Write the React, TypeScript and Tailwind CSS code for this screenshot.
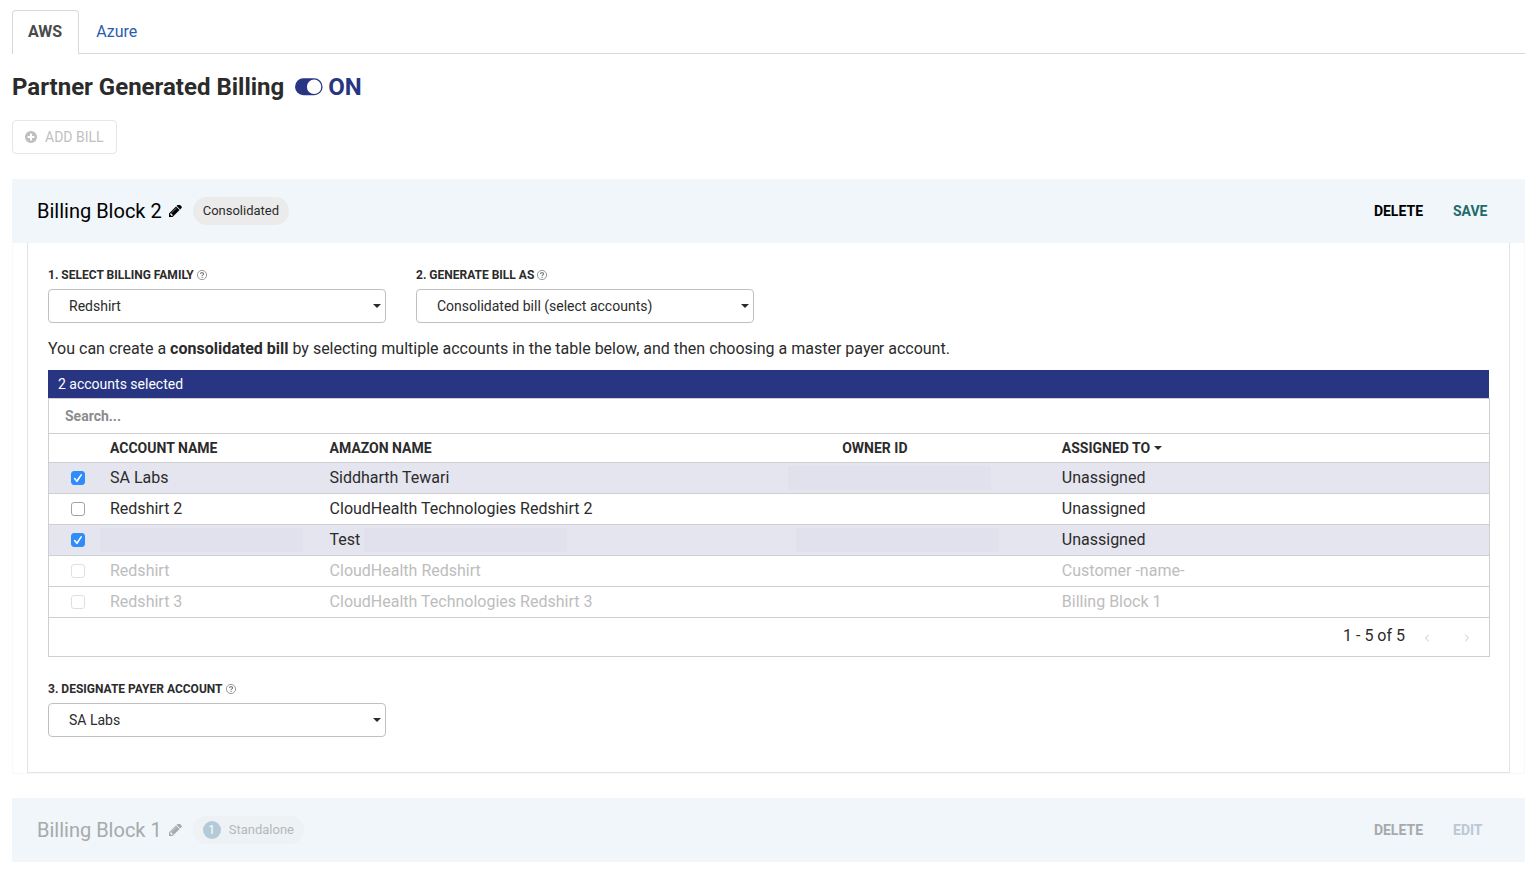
import { useState } from "react";
import type { ReactNode } from "react";
import { ChevronLeft, ChevronRight } from "lucide-react";
import clsx from "clsx";

interface Account {
  id: number;
  name: string;
  amazonName: string;
  assignedTo: string;
  locked?: boolean;
  hideName?: boolean;
  hideAmazonName?: boolean;
  ownerMask?: string;
}

const ACCOUNTS: Account[] = [
  { id: 1, name: "SA Labs", amazonName: "Siddharth Tewari", assignedTo: "Unassigned", ownerMask: "-left-11" },
  { id: 2, name: "Redshirt 2", amazonName: "CloudHealth Technologies Redshirt 2", assignedTo: "Unassigned" },
  {
    id: 3,
    name: "",
    amazonName: "Test",
    assignedTo: "Unassigned",
    hideName: true,
    hideAmazonName: true,
    ownerMask: "-left-9",
  },
  { id: 4, name: "Redshirt", amazonName: "CloudHealth Redshirt", assignedTo: "Customer -name-", locked: true },
  {
    id: 5,
    name: "Redshirt 3",
    amazonName: "CloudHealth Technologies Redshirt 3",
    assignedTo: "Billing Block 1",
    locked: true,
  },
];

function PencilIcon() {
  return (
    <svg viewBox="0 256 1536 1408" className="h-3 w-[13px]" fill="currentColor" aria-hidden="true">
      <path d="M363 1536l91-91-235-235-91 91v107h128v128h107zM886 608q0-22-22-22-10 0-17 7l-542 542q-7 7-7 17 0 22 22 22 10 0 17-7l542-542q7-7 7-17zM832 416l416 416-832 832h-416v-416zM1515 512q0 53-37 90l-166 166-416-416 166-165q36-38 90-38 53 0 91 38l235 234q37 39 37 91z" />
    </svg>
  );
}

function PlusCircleIcon() {
  return (
    <svg viewBox="0 128 1536 1536" className="size-3" fill="currentColor" aria-hidden="true">
      <path d="M1216 960v-128q0-26-19-45t-45-19h-256v-256q0-26-19-45t-45-19h-128q-26 0-45 19t-19 45v256h-256q-26 0-45 19t-19 45v128q0 26 19 45t45 19h256v256q0 26 19 45t45 19h128q26 0 45-19t19-45v-256h256q26 0 45-19t19-45zM1536 896q0 209-103 385.5t-279.5 279.5-385.5 103-385.5-103-279.5-279.5-103-385.5 103-385.5 279.5-279.5 385.5-103 385.5 103 279.5 279.5 103 385.5z" />
    </svg>
  );
}

function HelpIcon() {
  return (
    <svg viewBox="0 0 10 10" className="size-[10px] text-[#808080]" fill="none" stroke="currentColor" aria-hidden="true">
      <circle cx="5" cy="5" r="4.6" strokeWidth="0.8" />
      <path d="M3.5 4C3.5 2.2 6.6 2.2 6.6 3.9C6.6 4.9 5.1 4.9 5.1 6.1" strokeWidth="1.1" />
      <path d="M5.1 6.8v1.1" strokeWidth="1.1" />
    </svg>
  );
}

function Caret({ className }: { className?: string }) {
  return (
    <svg viewBox="0 0 8 4" className={clsx("h-1 w-2", className)} fill="currentColor" aria-hidden="true">
      <path d="M0 0h8L4 4z" />
    </svg>
  );
}

function SelectField({ id, label, options }: { id: string; label: string; options: string[] }) {
  return (
    <div className="w-[338px]">
      <div className="flex h-5 items-center gap-[3px]">
        <label htmlFor={id} className="text-xs font-bold uppercase">
          {label}
        </label>
        <HelpIcon />
      </div>
      <div className="relative mt-1">
        <select
          id={id}
          className="h-[34px] w-full appearance-none rounded border border-[#c0c0c0] bg-white pr-6 pl-5 text-sm"
        >
          {options.map((option) => (
            <option key={option}>{option}</option>
          ))}
        </select>
        <Caret className="pointer-events-none absolute top-[15px] right-[5px]" />
      </div>
    </div>
  );
}

function Checkbox({
  label,
  checked,
  disabled,
  onChange,
}: {
  label: string;
  checked: boolean;
  disabled?: boolean;
  onChange: () => void;
}) {
  return (
    <span className="relative block size-[14px]">
      <input
        type="checkbox"
        aria-label={label}
        checked={checked}
        disabled={disabled}
        onChange={onChange}
        className="block size-[14px] appearance-none rounded-[3px] border border-[#a3a3a3] bg-white checked:border-[#2f8cfb] checked:bg-[#2f8cfb] disabled:border-[#e0e0e0]"
      />
      {checked && (
        <svg
          viewBox="0 0 14 14"
          className="pointer-events-none absolute inset-0 size-[14px]"
          fill="none"
          stroke="white"
          strokeWidth="1.6"
          strokeLinecap="round"
          strokeLinejoin="round"
        >
          <path d="M3.6 7.6l2.3 2.7 4.3-6.4" />
        </svg>
      )}
    </span>
  );
}

function Mask({ className }: { className: string }) {
  return <span className={clsx("absolute top-[3px] h-6 rounded-xs bg-[#e1e1ee]", className)} />;
}

function BlockHeader({
  title,
  badge,
  action,
  muted,
}: {
  title: string;
  badge: ReactNode;
  action: string;
  muted?: boolean;
}) {
  return (
    <header className="flex h-16 items-center justify-between bg-[#f0f6f9] pr-9 pl-[25px]">
      <div className={clsx("flex items-center", muted ? "text-[#a6aaac]" : "text-black")}>
        <h2 className="text-xl">{title}</h2>
        <button type="button" aria-label={`Rename ${title}`} disabled={muted} className="ml-[7px]">
          <PencilIcon />
        </button>
        <span
          className={clsx(
            "ml-[11px] flex h-7 items-center rounded-full px-[10px] text-[13px]",
            muted ? "bg-[#eef2f5] text-[#b4b8ba]" : "bg-[#ebebeb] text-[#2b2b2b]",
          )}
        >
          {badge}
        </span>
      </div>
      <div className="flex items-center gap-[30px] text-sm font-bold">
        <button type="button" disabled={muted} className={muted ? "text-[#a6aaac]" : "text-black"}>
          DELETE
        </button>
        <button
          type="button"
          disabled={muted}
          className={clsx("w-9 text-left", muted ? "text-[#bcc8d4]" : "text-[#21696b]")}
        >
          {action}
        </button>
      </div>
    </header>
  );
}

function AccountsTable() {
  const [selected, setSelected] = useState<number[]>([1, 3]);

  const toggle = (id: number) =>
    setSelected((prev) => (prev.includes(id) ? prev.filter((s) => s !== id) : [...prev, id]));

  return (
    <div>
      <div className="flex h-7 items-center bg-[#273582] px-[10px] text-sm text-white">
        {selected.length} accounts selected
      </div>
      <div className="-mr-px border border-[#cfcfd1]">
        <input
          type="search"
          aria-label="Search accounts"
          placeholder="Search..."
          className="block h-[34px] w-full px-4 text-sm font-bold placeholder:text-[#8c8c8c]"
        />
        <table className="w-full table-fixed border-collapse text-left">
          <colgroup>
            <col className="w-[51px]" />
            <col className="w-[15.25%]" />
            <col className="w-[35.6%]" />
            <col className="w-[15.25%]" />
            <col />
          </colgroup>
          <thead>
            <tr className="h-[29px] border-y border-[#cfcfd1] text-sm uppercase">
              <th aria-label="Selected" />
              <th className="px-[10px] font-bold">Account Name</th>
              <th className="px-[10px] font-bold">Amazon Name</th>
              <th className="px-[10px] font-bold">Owner ID</th>
              <th className="px-[10px] font-bold">
                <button type="button" className="flex items-center gap-1 uppercase">
                  Assigned To
                  <Caret />
                </button>
              </th>
            </tr>
          </thead>
          <tbody>
            {ACCOUNTS.map((account) => {
              const checked = selected.includes(account.id);

              return (
                <tr
                  key={account.id}
                  className={clsx(
                    "h-[31px] border-b border-[#cfcfd1]",
                    checked && "bg-[#e5e5ef]",
                    account.locked && "text-[#bdbdbd]",
                  )}
                >
                  <td className="pl-[22px]">
                    <Checkbox
                      label={`Select ${account.name || account.amazonName}`}
                      checked={checked}
                      disabled={account.locked}
                      onChange={() => toggle(account.id)}
                    />
                  </td>
                  <td className="relative px-[10px]">
                    {account.name}
                    {account.hideName && <Mask className="left-0 w-[203px]" />}
                  </td>
                  <td className="relative px-[10px]">
                    {account.amazonName}
                    {account.hideAmazonName && <Mask className="left-11 w-[203px]" />}
                  </td>
                  <td className="relative px-[10px]">
                    {account.ownerMask && <Mask className={clsx("w-[203px]", account.ownerMask)} />}
                  </td>
                  <td className="px-[10px]">{account.assignedTo}</td>
                </tr>
              );
            })}
          </tbody>
        </table>
        <div className="flex h-[38px] items-center justify-end pr-4 pb-[2px]">
          <span>1 - 5 of 5</span>
          <button type="button" aria-label="Previous page" disabled className="mt-1 ml-4 text-[#c3c1dd]">
            <ChevronLeft className="size-3" />
          </button>
          <button type="button" aria-label="Next page" disabled className="mt-1 ml-7 text-[#c3c1dd]">
            <ChevronRight className="size-3" />
          </button>
        </div>
      </div>
    </div>
  );
}

export default function App() {
  const [enabled, setEnabled] = useState(true);

  return (
    <main className="min-h-screen bg-white pt-[10px] pr-[15px] pb-2 pl-3 font-[Roboto,sans-serif] text-base text-[#2b2b2b]">
      <nav className="flex h-11 border-b border-[#d8d8d8]">
        <a
          href="#aws"
          className="-mb-px flex items-center rounded-t border border-b-0 border-[#d8d8d8] bg-white pr-4 pb-[2px] pl-[15px] font-bold text-[#4a4a4a]"
        >
          AWS
        </a>
        <a href="#azure" className="flex items-center px-[17px] text-[#2a5db0]">
          Azure
        </a>
      </nav>

      <div className="mt-4 flex h-[34px] items-center">
        <h1 className="text-2xl font-bold">Partner Generated Billing</h1>
        <button
          type="button"
          role="switch"
          aria-checked={enabled}
          onClick={() => setEnabled(!enabled)}
          className="ml-[11px] flex items-center gap-[5px] text-2xl font-bold text-[#273582]"
        >
          <svg viewBox="0 0 28 18" className="h-[18px] w-7" aria-hidden="true">
            <rect y="0.3" width="27.6" height="17" rx="8.5" fill="currentColor" />
            <circle cx={enabled ? 19.1 : 8.5} cy="8.8" r="7.2" fill="white" />
          </svg>
          {enabled ? "ON" : "OFF"}
        </button>
      </div>

      <button
        type="button"
        disabled
        className="mt-4 flex h-[34px] items-center gap-2 rounded border border-[#e6e6e6] px-3 text-sm text-[#bfbfbf]"
      >
        <PlusCircleIcon />
        ADD BILL
      </button>

      <section className="mt-[25px]">
        <BlockHeader title="Billing Block 2" badge="Consolidated" action="SAVE" />
        <div className="border-x border-b border-[#f8f8f8] px-[14px]">
          <div className="border border-t-0 border-[#e4e4e4] px-5 pt-[22px] pb-[35px]">
            <div className="flex gap-[30px]">
              <SelectField id="billing-family" label="1. Select billing family" options={["Redshirt"]} />
              <SelectField
                id="bill-type"
                label="2. Generate bill as"
                options={["Consolidated bill (select accounts)"]}
              />
            </div>
            <p className="mt-[14px] mb-[9px]">
              You can create a <strong className="font-bold">consolidated bill</strong> by selecting multiple accounts
              in the table below, and then choosing a master payer account.
            </p>
            <AccountsTable />
            <div className="mt-[22px]">
              <SelectField id="payer-account" label="3. Designate payer account" options={["SA Labs"]} />
            </div>
          </div>
        </div>
      </section>

      <section className="mt-6">
        <BlockHeader
          title="Billing Block 1"
          action="EDIT"
          muted
          badge={
            <>
              <span className="mr-2 flex size-[18px] items-center justify-center rounded-full bg-[#b5cad8] text-xs text-white">
                1
              </span>
              Standalone
            </>
          }
        />
      </section>
    </main>
  );
}
